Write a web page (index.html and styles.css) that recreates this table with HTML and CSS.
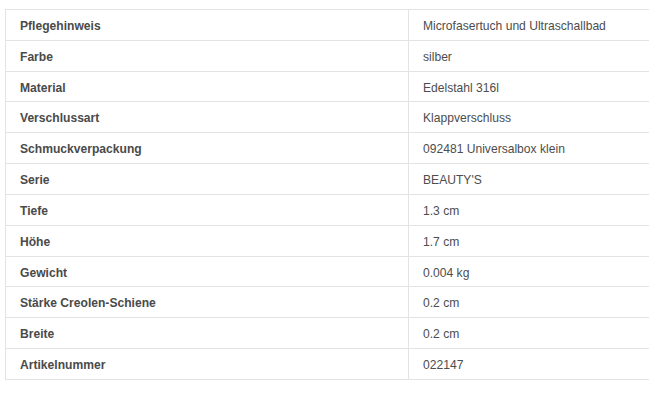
FILE: index.html
```html
<!DOCTYPE html>
<html lang="de">
<head>
<meta charset="utf-8">
<link rel="stylesheet" href="styles.css">
</head>
<body>
<table class="specs">
  <tbody>
    <tr><th>Pflegehinweis</th><td>Microfasertuch und Ultraschallbad</td></tr>
    <tr><th>Farbe</th><td>silber</td></tr>
    <tr><th>Material</th><td>Edelstahl 316l</td></tr>
    <tr><th>Verschlussart</th><td>Klappverschluss</td></tr>
    <tr><th>Schmuckverpackung</th><td>092481 Universalbox klein</td></tr>
    <tr><th>Serie</th><td>BEAUTY'S</td></tr>
    <tr><th>Tiefe</th><td>1.3 cm</td></tr>
    <tr><th>Höhe</th><td>1.7 cm</td></tr>
    <tr><th>Gewicht</th><td>0.004 kg</td></tr>
    <tr><th>Stärke Creolen-Schiene</th><td>0.2 cm</td></tr>
    <tr><th>Breite</th><td>0.2 cm</td></tr>
    <tr><th>Artikelnummer</th><td>022147</td></tr>
  </tbody>
</table>
</body>
</html>
```
FILE: styles.css
```css
html, body {
  margin: 0;
  background: #ffffff;
  overflow: hidden;
}
body {
  padding: 9px 0 0 5px;
  font-family: "Liberation Sans", Arial, sans-serif;
  font-size: 12.1px;
  color: #4d4d4d;
}
.specs {
  border-collapse: collapse;
  width: 806px;
  table-layout: fixed;
}
.specs th,
.specs td {
  border: 1px solid #e3e3e3;
  padding: 8px 14px 4px 14px;
  line-height: 17.83px;
  text-align: left;
  vertical-align: top;
}
.specs th {
  width: 374px;
  font-weight: bold;
  color: #4a4a4a;
}
```
